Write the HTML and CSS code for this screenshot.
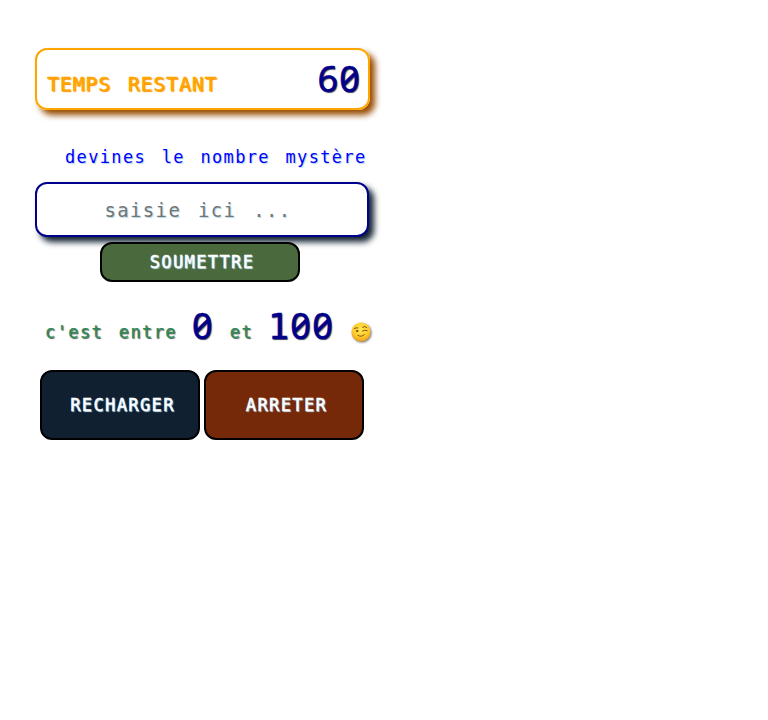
FILE: index.html
```html
<!DOCTYPE html>
<html lang="fr">
<head>
<meta charset="utf-8">
<title>Nombre mystère</title>
<link rel="stylesheet" href="styles.css">
</head>
<body>
<main class="game">
  <section class="timer"><span class="timer-label">TEMPS RESTANT</span><span class="number">60</span></section>
  <label class="prompt" for="guess">devines le nombre mystère</label>
  <input class="guess" id="guess" type="text" placeholder="saisie ici ...">
  <button class="button submit">SOUMETTRE</button>
  <p class="hint"><span class="word">c'est entre</span><span class="number low">0</span><span class="word et">et</span><span class="number high"><span class="one">1</span>00</span>
    <svg class="wink" viewBox="0 0 20 20" aria-hidden="true">
      <defs><radialGradient id="face" cx=".5" cy=".35" r=".65"><stop offset="0" stop-color="#ffe94e"/><stop offset=".65" stop-color="#fecb2e"/><stop offset="1" stop-color="#e99a1c"/></radialGradient></defs>
      <circle cx="10" cy="10" r="9.6" fill="url(#face)"/>
      <ellipse cx="6.2" cy="9" rx="1.3" ry="1.1" fill="#70430c"/>
      <path d="M3.3 6.6q1.5-1.4 3.6-.7M11.6 5.2q2.6-1.6 4.2.2M11.4 9q2.3-1.6 4.8-.4M6.8 13.3q3.6 2.5 6.6-.8" fill="none" stroke="#86500d" stroke-width="1" stroke-linecap="round"/>
    </svg>
  </p>
  <div class="actions"><button class="button reload">RECHARGER</button><button class="button stop">ARRETER</button></div>
</main>
</body>
</html>
```
FILE: styles.css
```css
* { box-sizing: border-box; }
body { margin: 0; background: #fff; font-family: "DejaVu Sans Mono", monospace; }
.game { display: flex; flex-direction: column; align-items: flex-start; width: 380px; padding: 48px 0 0 35px; }
.timer { display: flex; align-items: baseline; justify-content: space-between; width: 335px; height: 62px; padding: 4px 7px 0 10px; border: 2px solid orange; border-radius: 12px; box-shadow: 5px 5px 6px #964b00; }
.timer-label { font-size: 20px; letter-spacing: .75px; word-spacing: 4px; color: orange; -webkit-text-stroke: .3px orange; text-shadow: 1px 1px 1px darkorange; transform: translateY(-1px); }
.number { font: 400 36px/50px "Noto Sans", sans-serif; font-feature-settings: "zero"; letter-spacing: 1.2px; color: darkblue; -webkit-text-stroke: .6px darkblue; text-shadow: 1px 1px 1px #555; }
.one { font-family: "DejaVu Sans Mono", monospace; font-size: 35px; }
.prompt { margin: 36px 0 0 30px; font-size: 17px; line-height: 22px; letter-spacing: 1.35px; word-spacing: 4px; color: blue; text-shadow: 1px 1px 1px lightblue; white-space: nowrap; }
.guess { width: 334px; height: 55px; margin: 14px 0 5px; padding: 0 18px 0 10px; border: 2px solid darkblue; border-radius: 12px; background: #fff; box-shadow: 5px 5px 6px #112030; font: 19px "DejaVu Sans Mono", monospace; letter-spacing: 1.35px; word-spacing: 4px; text-align: center; text-shadow: 1px 1px 1px lightblue; }
.guess::placeholder { color: #757575; }
.button { padding: 0; border: 2px solid #000; border-radius: 12px; color: #fff; font: 17px "DejaVu Sans Mono", monospace; letter-spacing: 1.4px; -webkit-text-stroke: .4px #fff; text-shadow: 1px 1px 1px lightblue; }
.submit { width: 200px; height: 40px; margin-left: 65px; padding-left: 4px; background: #4a693c; }
.hint { display: flex; align-items: baseline; height: 50px; margin: 19px 0 0 10px; white-space: nowrap; }
.word { font-size: 17px; letter-spacing: 1.4px; word-spacing: 4px; color: seagreen; -webkit-text-stroke: .25px seagreen; text-shadow: 1px 1px 1px #555; transform: translateY(-1px); }
.low { margin-left: 15px; }
.et { margin-left: 16px; }
.high { margin-left: 15px; }
.wink { width: 20px; height: 20px; margin-left: 17px; transform: translateY(3px); filter: drop-shadow(1px 1px 1px #777); }
.actions { display: flex; gap: 4px; margin: 19px 0 0 5px; }
.reload, .stop { width: 160px; height: 70px; padding-left: 5px; }
.reload { background: #112030; }
.stop { background: #752909; }
```
